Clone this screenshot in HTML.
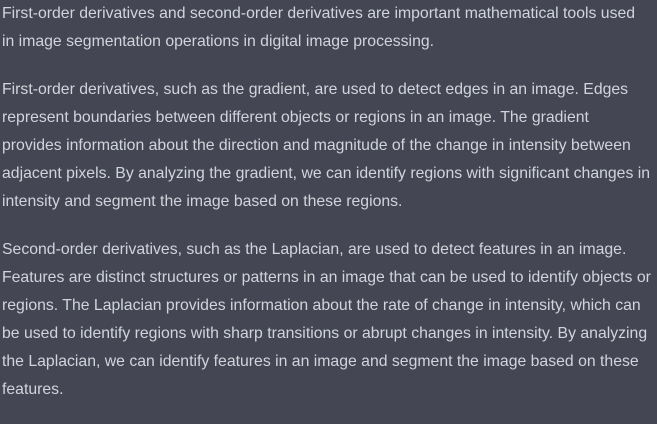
<!DOCTYPE html>
<html><head><meta charset="utf-8"><style>
html,body{margin:0;padding:0;background:#444654;width:657px;height:411px;overflow:hidden}
body{font-family:"Liberation Sans",sans-serif;font-size:15.8px;color:#d1d5db;line-height:28px}
.w{position:absolute;left:2px;top:0px}
p{margin:0 0 20px 0;white-space:nowrap}
</style></head><body><div class="w">
<p>First-order derivatives and second-order derivatives are important mathematical tools used<br>in image segmentation operations in digital image processing.</p>
<p>First-order derivatives, such as the gradient, are used to detect edges in an image. Edges<br>represent boundaries between different objects or regions in an image. The gradient<br>provides information about the direction and magnitude of the change in intensity between<br>adjacent pixels. By analyzing the gradient, we can identify regions with significant changes in<br>intensity and segment the image based on these regions.</p>
<p>Second-order derivatives, such as the Laplacian, are used to detect features in an image.<br>Features are distinct structures or patterns in an image that can be used to identify objects or<br>regions. The Laplacian provides information about the rate of change in intensity, which can<br>be used to identify regions with sharp transitions or abrupt changes in intensity. By analyzing<br>the Laplacian, we can identify features in an image and segment the image based on these<br>features.</p>
</div></body></html>
